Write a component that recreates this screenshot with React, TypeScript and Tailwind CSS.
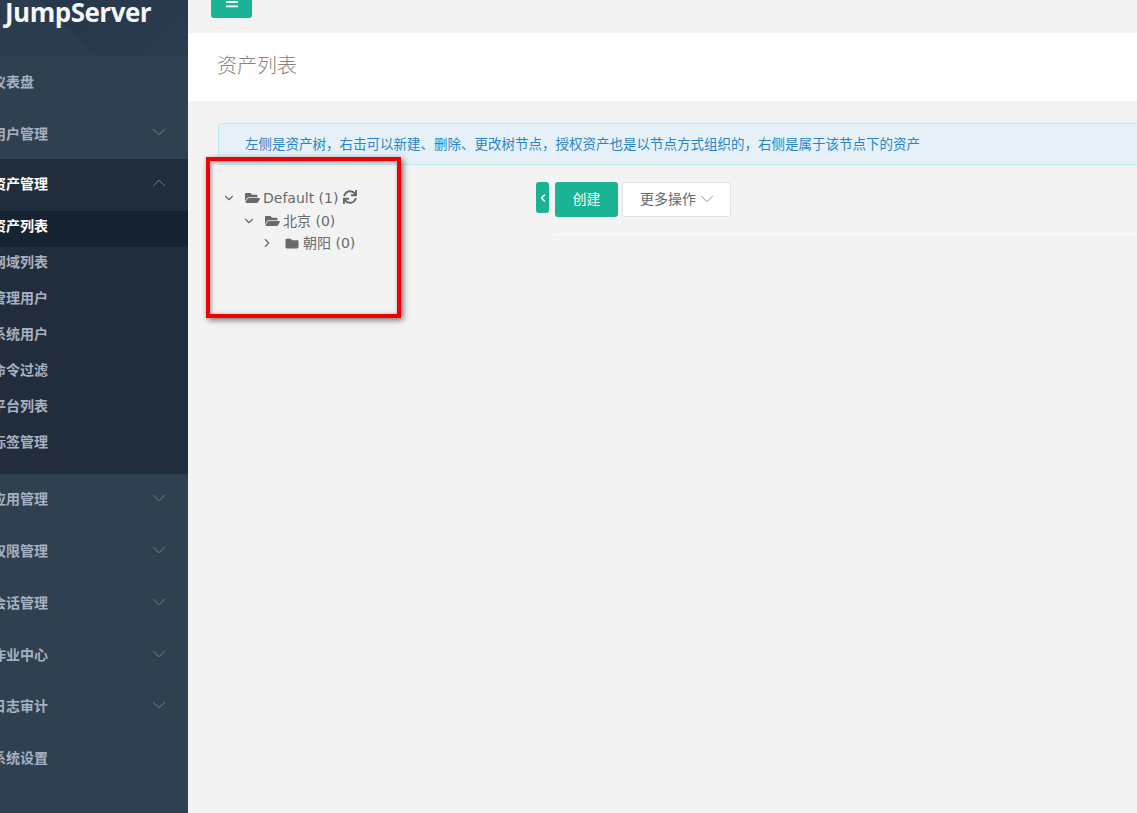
import React from 'react';
import { FaBars, FaFolder, FaFolderOpen, FaSync } from 'react-icons/fa';
import { ChevronDown, ChevronLeft, ChevronRight, ChevronUp } from 'lucide-react';

const cjk = { fontFamily: '"DejaVu Sans", "Noto Sans CJK SC", sans-serif' };
const cjkOnly = { fontFamily: '"Open Sans", "Noto Sans CJK SC", sans-serif' };

const topBefore = [
  { label: '仪表盘', arrow: false, height: 'h-[52px]', pad: 'pb-0' },
  { label: '用户管理', arrow: true, height: 'h-[51px]', pad: 'pb-0' },
];

const subItems = ['资产列表', '网域列表', '管理用户', '系统用户', '命令过滤', '平台列表', '标签管理'];

const topAfter = [
  { label: '应用管理', arrow: true, height: 'h-[52px]', pad: 'pb-[2px]' },
  { label: '权限管理', arrow: true, height: 'h-[52px]', pad: 'pb-[2px]' },
  { label: '会话管理', arrow: true, height: 'h-[52px]', pad: 'pb-[2px]' },
  { label: '作业中心', arrow: true, height: 'h-[52px]', pad: 'pb-[2px]' },
  { label: '日志审计', arrow: true, height: 'h-[51px]', pad: 'pb-[3px]' },
  { label: '系统设置', arrow: false, height: 'h-[52px]', pad: 'pb-[2px]' },
];

const NavRow = ({ label, arrow, height, pad }: { label: string; arrow: boolean; height: string; pad: string }) => (
  <div className={`${height} ${pad} flex items-center justify-between pr-[18px]`}>
    <span className="-ml-2 text-sm font-semibold text-[#a7b1c2]">{label}</span>
    {arrow && <ChevronDown className="-mt-[3px] h-[22px] w-[22px] text-[#7d8997]" strokeWidth={1} />}
  </div>
);

const Sidebar = () => (
  <aside className="flex h-full w-[188px] shrink-0 flex-col overflow-hidden bg-[#2f4050]" style={cjkOnly}>
    <div className="relative h-[56px] overflow-hidden bg-[#2a3c4d]">
      <div className="absolute left-[81px] top-[-100px] h-[200px] w-[200px] rotate-45 bg-gradient-to-r from-[#26374a] to-[#2c3e50]" />
      <div
        className="relative -mt-[2px] pl-[5px] text-[26px] font-bold leading-[28px] tracking-[-0.5px] text-[#f4f6f8]"
        style={{ fontFamily: '"Open Sans", sans-serif' }}
      >
        JumpServer
      </div>
    </div>
    {topBefore.map(item => (
      <NavRow key={item.label} {...item} />
    ))}
    <div className="bg-[#212d3c] pb-[11px]">
      <div className="flex h-[52px] items-center justify-between pb-[2px] pr-[18px]">
        <span className="-ml-2 text-sm font-semibold text-white">资产管理</span>
        <ChevronUp className="-mt-[3px] h-[22px] w-[22px] text-[#7d8997]" strokeWidth={1} />
      </div>
      {subItems.map((item, index) => (
        <div
          key={item}
          className={`flex h-[36px] items-center pb-[6px] text-sm font-semibold ${index === 0 ? 'bg-[#152332] text-white' : 'text-[#a7b1c2]'}`}
        >
          <span className="-ml-2">{item}</span>
        </div>
      ))}
    </div>
    {topAfter.map(item => (
      <NavRow key={item.label} {...item} />
    ))}
  </aside>
);

const TreeRow = ({ indent, open, arrow, label, refresh }: { indent: string; open: boolean; arrow: 'down' | 'right'; label: string; refresh?: boolean }) => (
  <div className={`flex h-[22.5px] items-center text-sm text-[#676a6c] ${indent}`}>
    {arrow === 'down' ? (
      <ChevronDown className="h-[14px] w-[14px] shrink-0 text-[#676a6c]" strokeWidth={2} />
    ) : (
      <ChevronRight className="h-[14px] w-[14px] shrink-0 text-[#676a6c]" strokeWidth={2} />
    )}
    {open ? (
      <FaFolderOpen className="ml-[9px] h-[14px] w-[15px] shrink-0 text-[#676a6c]" />
    ) : (
      <FaFolder className="ml-[11px] h-[13px] w-[14px] shrink-0 text-[#676a6c]" />
    )}
    <span className={open ? 'ml-[3px]' : 'ml-[4px]'}>{label}</span>
    {refresh && <FaSync className="-mt-[3px] ml-[5px] h-[14px] w-[14px] text-[#676a6c]" />}
  </div>
);

export default function App() {
  return (
    <div className="flex h-[813px] w-[1137px] overflow-hidden bg-[#f3f3f4]" style={cjk}>
      <Sidebar />
      <main className="relative min-w-0 flex-1">
        <div className="h-[33px] pl-[23px]">
          <button className="flex h-[18px] w-[41px] items-center justify-center rounded-b-[3px] bg-[#1ab394] text-white">
            <FaBars className="mb-[14px] h-[14px] w-[14px]" />
          </button>
        </div>
        <div className="flex h-[68px] items-center bg-white pb-[2px] pl-[29px]">
          <h2 className="text-[20px] font-light text-[#8a8178]" style={cjkOnly}>资产列表</h2>
        </div>
        <div className="pl-[30px] pt-[22px]">
          <div className="-mr-4 flex h-[42px] items-center rounded-l-[4px] border border-[#bce8f1] bg-[#e5f1f7] pl-[26px] text-[13.5px] text-[#2a85c8]" style={cjkOnly}>
            左侧是资产树，右击可以新建、删除、更改树节点，授权资产也是以节点方式组织的，右侧是属于该节点下的资产
          </div>
          <div className="mt-[17px] flex">
            <div className="w-[318px] shrink-0 pl-[4px] pt-[5px]">
              <TreeRow indent="" open arrow="down" label="Default (1)" refresh />
              <TreeRow indent="pl-[20px]" open arrow="down" label="北京 (0)" />
              <TreeRow indent="pl-[38px]" open={false} arrow="right" label="朝阳 (0)" />
            </div>
            <div className="flex-1">
              <div className="flex items-start" style={cjkOnly}>
                <button className="flex h-[31px] w-[13px] items-center justify-center rounded-[3px] bg-[#1ab394] text-white">
                  <ChevronLeft className="h-3 w-3" strokeWidth={3} />
                </button>
                <button className="ml-[6px] h-[35px] w-[63px] rounded-[3px] bg-[#1ab394] pb-[2px] text-sm text-white">创建</button>
                <button className="ml-[4px] flex h-[35px] w-[109px] items-center rounded-[3px] border border-[#dfe1e9] bg-white pb-[2px] pl-[17px] text-sm text-[#676a6c]">
                  更多操作
                  <ChevronDown className="h-[22px] w-[22px] text-[#7d8997]" strokeWidth={1} />
                </button>
              </div>
              <div className="ml-[19px] mt-[17px] h-px bg-[#fbfbfb]" />
            </div>
          </div>
        </div>
        <div className="absolute left-[18px] top-[157px] h-[161px] w-[195px] border-4 border-[#f00000] shadow-[2px_2px_6px_rgba(0,0,0,0.55),inset_1px_1px_4px_rgba(0,0,0,0.4)]" />
      </main>
    </div>
  );
}
